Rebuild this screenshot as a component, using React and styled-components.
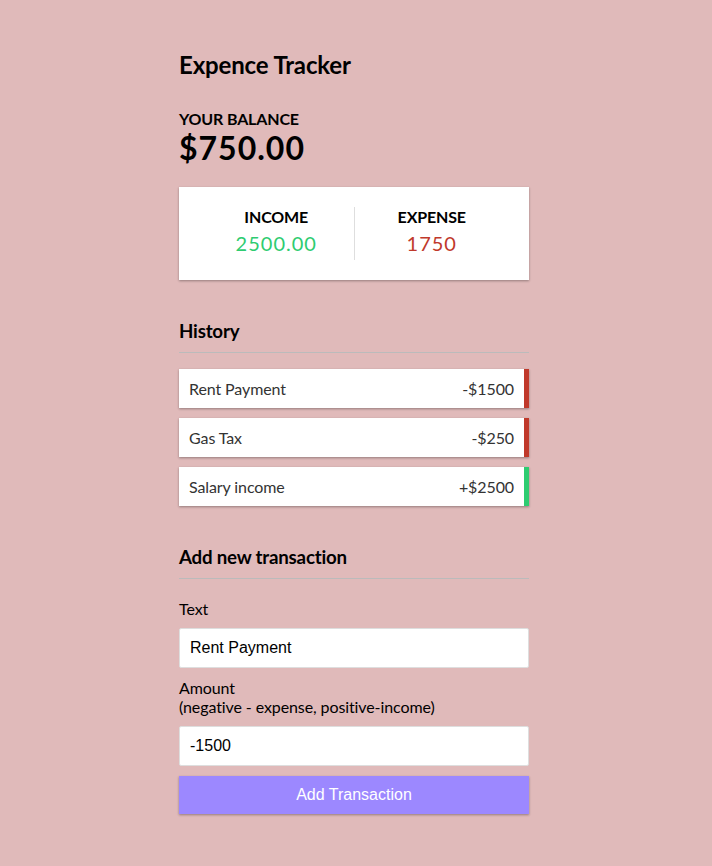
import React from "react";
import styled, { createGlobalStyle } from "styled-components";

const GlobalStyle = createGlobalStyle`
  * { box-sizing: border-box; }
  html, body { margin: 0; padding: 0; }
  body {
    background-color: #e0baba;
    font-family: Lato, "Open Sans", sans-serif;
    color: #000;
    min-height: 100vh;
    letter-spacing: -0.1px;
  }
`;

const shadow = "0 1px 3px rgba(0,0,0,0.12), 0 1px 2px rgba(0,0,0,0.24)";

const Page = styled.div`
  display: flex;
  justify-content: center;
  padding: 50px 4px 0 0;
`;

const Container = styled.div`
  width: 350px;
`;

const Title = styled.h2`
  font-size: 24px;
  font-weight: 700;
  letter-spacing: -0.15px;
  margin: 0 0 30px;
`;

const Small = styled.h4`
  margin: 0;
  font-size: 16px;
  letter-spacing: -0.15px;
  text-transform: uppercase;
`;

const Balance = styled.h1`
  margin: 0;
  font-size: 32px;
  letter-spacing: 1px;
`;

const IncExp = styled.div`
  background: #fff;
  box-shadow: ${shadow};
  padding: 20px;
  display: flex;
  justify-content: space-between;
  margin: 20px 0;
`;

const Half = styled.div`
  flex: 1;
  text-align: center;
  border-right: ${(p) => (p.$first ? "1px solid #dedede" : "none")};
`;

const Money = styled.p`
  font-size: 20px;
  letter-spacing: 1px;
  margin: 5px 0;
  color: ${(p) => (p.$plus ? "#2ecc71" : "#c0392b")};
`;

const SectionTitle = styled.h3`
  font-size: 18.72px;
  letter-spacing: -0.2px;
  border-bottom: 1px solid #bbb;
  padding-bottom: 10px;
  margin: 40px 0 10px;
`;

const List = styled.ul`
  list-style: none;
  padding: 0;
  margin: 16px 0 40px;
`;

const Item = styled.li`
  background: #fff;
  box-shadow: ${shadow};
  color: #333;
  display: flex;
  justify-content: space-between;
  padding: 10px;
  margin: 10px 0;
  font-size: 16px;
  border-right: 5px solid ${(p) => (p.$plus ? "#2ecc71" : "#c0392b")};
`;

const Field = styled.div``;

const Label = styled.label`
  display: inline-block;
  margin: 10px 0;
  font-size: 16px;
`;

const Input = styled.input`
  border: 1px solid #dedede;
  border-radius: 2px;
  display: block;
  font-size: 16px;
  font-family: "Liberation Sans", Arial, sans-serif;
  letter-spacing: 0;
  padding: 10px;
  width: 100%;
  color: #000;
  background: #fff;
`;

const Button = styled.button`
  cursor: pointer;
  background-color: #9c88ff;
  box-shadow: ${shadow};
  color: #fff;
  border: 0;
  display: block;
  font-size: 16px;
  font-family: "Liberation Sans", Arial, sans-serif;
  letter-spacing: 0;
  margin: 10px 0 30px;
  padding: 10px;
  width: 100%;
`;

const transactions = [
  { id: 1, text: "Rent Payment", amount: -1500 },
  { id: 2, text: "Gas Tax", amount: -250 },
  { id: 3, text: "Salary income", amount: 2500 },
];

export default function App() {
  return (
    <>
      <GlobalStyle />
      <Page>
        <Container>
          <Title>Expence Tracker</Title>
          <Small>Your Balance</Small>
          <Balance>$750.00</Balance>
          <IncExp>
            <Half $first>
              <Small>Income</Small>
              <Money $plus>2500.00</Money>
            </Half>
            <Half>
              <Small>Expense</Small>
              <Money>1750</Money>
            </Half>
          </IncExp>
          <SectionTitle>History</SectionTitle>
          <List>
            {transactions.map((t) => (
              <Item key={t.id} $plus={t.amount > 0}>
                {t.text}
                <span>
                  {t.amount < 0 ? "-" : "+"}${Math.abs(t.amount)}
                </span>
              </Item>
            ))}
          </List>
          <SectionTitle>Add new transaction</SectionTitle>
          <form onSubmit={(e) => e.preventDefault()}>
            <Field>
              <Label htmlFor="text">Text</Label>
              <Input type="text" id="text" defaultValue="Rent Payment" placeholder="Enter text..." />
            </Field>
            <Field>
              <Label htmlFor="amount">
                Amount <br />
                (negative - expense, positive-income)
              </Label>
              <Input type="number" id="amount" defaultValue="-1500" placeholder="Enter amount..." />
            </Field>
            <Button>Add Transaction</Button>
          </form>
        </Container>
      </Page>
    </>
  );
}
